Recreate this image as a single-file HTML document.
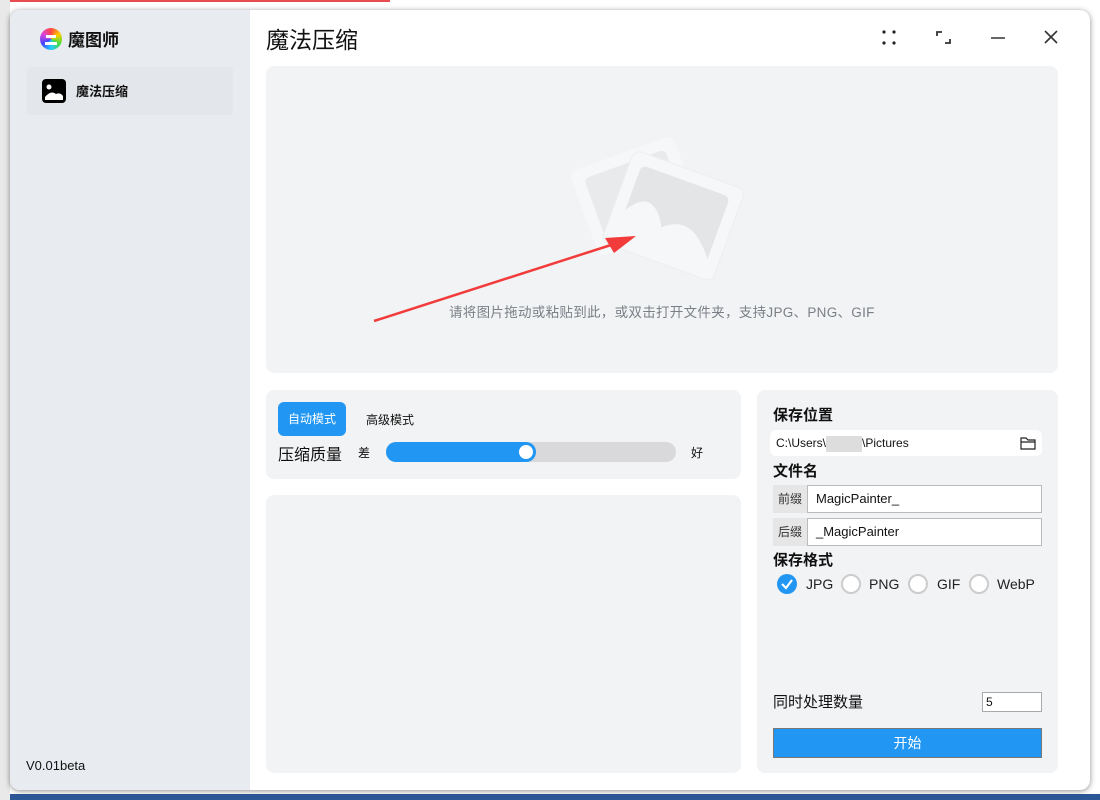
<!DOCTYPE html>
<html><head><meta charset="utf-8"><style>
*{margin:0;padding:0;box-sizing:border-box}
body{width:1100px;height:800px;overflow:hidden;position:relative;background:#fff;font-family:"Liberation Sans","Noto Sans CJK SC",sans-serif;color:#111}
.abs{position:absolute}
.win{position:absolute;left:10px;top:10px;width:1080px;height:780px;border-radius:10px;background:#fff;overflow:hidden;box-shadow:0 1px 6px rgba(0,0,0,.45)}
.side{position:absolute;left:0;top:0;width:240px;height:780px;background:#e8ebef}
.panel{position:absolute;background:#f2f3f5;border-radius:8px}
.lbl{font-size:15px;font-weight:bold;position:absolute;left:16px}
.inp{position:absolute;background:#fff;border:1px solid #bbb;font-size:13px;padding-left:8px;line-height:26px;height:28px}
.pre{position:absolute;left:16px;width:34px;height:28px;background:#e6e6e6;font-size:12px;color:#333;line-height:28px;text-align:center}
.radio{position:absolute;top:184px;width:20px;height:20px;border-radius:50%;border:2px solid #ccc;background:#fff}
.rt{position:absolute;top:184px;font-size:14px;line-height:20px;color:#222}
</style></head><body>
<div class="abs" style="left:0;top:0;width:390px;height:2px;background:#e84c4c"></div>
<div class="abs" style="left:0;top:794px;width:1100px;height:6px;background:#2b5797"></div>
<div class="abs" style="left:0;top:0;width:10px;height:800px;background:#e9e9e9"></div>
<div class="win">
 <div class="side">
  <div class="abs" style="left:30px;top:18px;width:22px;height:22px;border-radius:50%;background:conic-gradient(#f44,#fc0,#4d4,#2cf,#44f,#d4d,#f44)"></div>
  <div class="abs" style="left:36px;top:25px;width:10px;height:3px;background:#fff"></div>
  <div class="abs" style="left:35px;top:32px;width:12px;height:3px;background:#fff"></div>
  <div class="abs" style="left:58px;top:16px;font-size:17px;font-weight:bold">魔图师</div>
  <div class="abs" style="left:17px;top:57px;width:206px;height:48px;background:#e3e6ea;border-radius:4px"></div>
  <svg class="abs" style="left:32px;top:69px" width="24" height="24" viewBox="0 0 24 24"><rect x="0" y="0" width="24" height="24" rx="4" fill="#000"/><circle cx="7" cy="8" r="2.5" fill="#fff"/><path d="M3 21 L3 18 Q9 11 14 15 Q18 13 21 17 L21 21 Z" fill="#fff"/></svg>
  <div class="abs" style="left:66px;top:71px;font-size:13px;font-weight:bold">魔法压缩</div>
  <div class="abs" style="left:16px;top:748px;font-size:13px">V0.01beta</div>
 </div>
 <div class="abs" style="left:256px;top:11px;font-size:23px">魔法压缩</div>
 <svg class="abs" style="left:868px;top:18px" width="200" height="22" viewBox="0 0 200 22">
  <g fill="#222"><circle cx="6" cy="4" r="1.6"/><circle cx="16" cy="4" r="1.6"/><circle cx="6" cy="15" r="1.6"/><circle cx="16" cy="15" r="1.6"/></g>
  <path d="M59 8 V4 H64 M72 11 V15 H67" stroke="#333" stroke-width="1.8" fill="none"/>
  <path d="M113 10 H127" stroke="#333" stroke-width="1.6"/>
  <path d="M167 3 L179 15 M179 3 L167 15" stroke="#333" stroke-width="1.6"/>
 </svg>
 <div class="panel" style="left:256px;top:56px;width:792px;height:307px">
  <svg class="abs" style="left:300px;top:60px" width="180" height="160" viewBox="0 0 180 160">
   <g transform="rotate(-20 70 70)"><rect x="15" y="25" width="110" height="90" rx="8" fill="#f6f7f8"/><rect x="27" y="36" width="86" height="66" rx="5" fill="#e9eaec"/></g>
   <g transform="rotate(20 105 90)"><rect x="48" y="40" width="118" height="98" rx="8" fill="#f6f7f8" stroke="#eceef0"/><rect x="60" y="52" width="94" height="72" rx="6" fill="#e4e5e7"/><path d="M60 124 V100 Q80 68 100 104 Q125 80 154 118 V124 Z" fill="#f6f7f8"/></g>
  </svg>
  <svg class="abs" style="left:105px;top:170px" width="280" height="90" viewBox="0 0 280 90"><path d="M3 85 L240 9" stroke="#f23c3c" stroke-width="2.5"/><path d="M265 0 L234 2 L243 17 Z" fill="#f23c3c"/></svg>
  <div class="abs" style="left:183px;top:235px;font-size:13.5px;color:#7a7f86;letter-spacing:0.3px;white-space:nowrap">请将图片拖动或粘贴到此，或双击打开文件夹，支持JPG、PNG、GIF</div>
 </div>
 <div class="panel" style="left:256px;top:380px;width:475px;height:89px">
  <div class="abs" style="left:12px;top:12px;width:68px;height:34px;background:#2196f3;border-radius:6px;color:#fff;font-size:12px;line-height:34px;text-align:center">自动模式</div>
  <div class="abs" style="left:100px;top:21px;font-size:12px">高级模式</div>
  <div class="abs" style="left:12px;top:51px;font-size:16px">压缩质量</div>
  <div class="abs" style="left:92px;top:54px;font-size:12px">差</div>
  <div class="abs" style="left:120px;top:52px;width:290px;height:20px;background:#d9d9db;border-radius:10px"></div>
  <div class="abs" style="left:120px;top:52px;width:150px;height:20px;background:#2196f3;border-radius:10px"></div>
  <div class="abs" style="left:253px;top:55px;width:14px;height:14px;background:#fff;border-radius:50%"></div>
  <div class="abs" style="left:425px;top:54px;font-size:12px">好</div>
 </div>
 <div class="panel" style="left:256px;top:485px;width:475px;height:278px"></div>
 <div class="panel" style="left:747px;top:380px;width:301px;height:383px">
  <div class="lbl" style="top:14px">保存位置</div>
  <div class="abs" style="left:13px;top:40px;width:272px;height:26px;background:#fff;border-radius:6px;font-size:12px;line-height:26px;padding-left:6px">C:\Users\<span style="display:inline-block;width:36px;height:16px;background:#ddd;vertical-align:middle"></span>\Pictures</div>
  <svg class="abs" style="left:263px;top:46px" width="16" height="14" viewBox="0 0 16 14"><path d="M1 2 H6 L8 4 H15 V13 H1 Z M1 6 H15" stroke="#222" stroke-width="1.2" fill="none"/></svg>
  <div class="lbl" style="top:70px">文件名</div>
  <div class="pre" style="top:95px">前缀</div>
  <div class="inp" style="left:50px;top:95px;width:235px">MagicPainter_</div>
  <div class="pre" style="top:128px">后缀</div>
  <div class="inp" style="left:50px;top:128px;width:235px">_MagicPainter</div>
  <div class="lbl" style="top:159px">保存格式</div>
  <div class="radio" style="left:20px;border:none;background:#2196f3"></div>
  <svg class="abs" style="left:20px;top:184px" width="20" height="20" viewBox="0 0 20 20"><path d="M5 10 L9 14 L15 6" stroke="#fff" stroke-width="2.2" fill="none"/></svg>
  <div class="rt" style="left:49px">JPG</div>
  <div class="radio" style="left:84px"></div><div class="rt" style="left:112px">PNG</div>
  <div class="radio" style="left:151px"></div><div class="rt" style="left:180px">GIF</div>
  <div class="radio" style="left:212px"></div><div class="rt" style="left:240px">WebP</div>
  <div class="abs" style="left:16px;top:301px;font-size:15px">同时处理数量</div>
  <div class="abs" style="left:225px;top:302px;width:60px;height:20px;background:#fff;border:1px solid #aaa;font-size:12px;padding-left:3px;line-height:18px">5</div>
  <div class="abs" style="left:16px;top:338px;width:269px;height:30px;background:#2196f3;border:1px solid #777;color:#fff;font-size:14px;text-align:center;line-height:28px">开始</div>
 </div>
</div>
</body></html>
